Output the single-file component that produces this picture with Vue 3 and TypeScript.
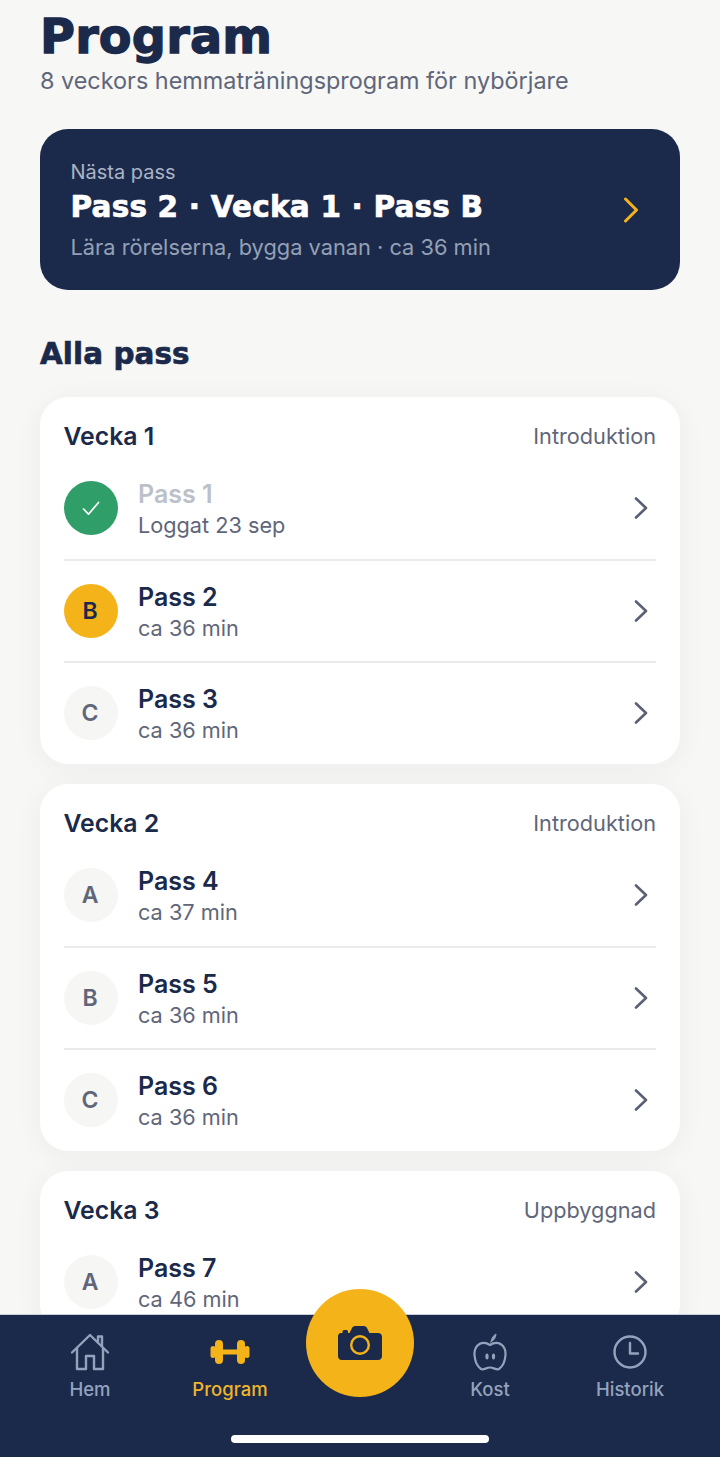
<script setup lang="ts">
interface Row { name: string; sub: string; badge: string; kind: 'done' | 'current' | 'idle' }
interface Week { title: string; tag: string; rows: Row[] }
const weeks: Week[] = [
  { title: 'Vecka 1', tag: 'Introduktion', rows: [
    { name: 'Pass 1', sub: 'Loggat 23 sep', badge: '', kind: 'done' },
    { name: 'Pass 2', sub: 'ca 36 min', badge: 'B', kind: 'current' },
    { name: 'Pass 3', sub: 'ca 36 min', badge: 'C', kind: 'idle' },
  ] },
  { title: 'Vecka 2', tag: 'Introduktion', rows: [
    { name: 'Pass 4', sub: 'ca 37 min', badge: 'A', kind: 'idle' },
    { name: 'Pass 5', sub: 'ca 36 min', badge: 'B', kind: 'idle' },
    { name: 'Pass 6', sub: 'ca 36 min', badge: 'C', kind: 'idle' },
  ] },
  { title: 'Vecka 3', tag: 'Uppbyggnad', rows: [
    { name: 'Pass 7', sub: 'ca 46 min', badge: 'A', kind: 'idle' },
  ] },
]
</script>

<template>
  <div class="app">
    <main class="page">
      <h1 class="title">Program</h1>
      <p class="subtitle">8 veckors hemmaträningsprogram för nybörjare</p>

      <section class="next">
        <div class="next-text">
          <div class="next-label">Nästa pass</div>
          <div class="next-title">Pass 2 · Vecka 1 · Pass B</div>
          <div class="next-sub">Lära rörelserna, bygga vanan · ca 36 min</div>
        </div>
        <svg class="next-chev" width="16" height="26" viewBox="0 0 16 26" fill="none">
          <path d="M2.500 2l11 11-11 11" stroke="#f5b31a" stroke-width="3" stroke-linecap="round" stroke-linejoin="round" />
        </svg>
      </section>

      <h2 class="section">Alla pass</h2>

      <section v-for="w in weeks" :key="w.title" class="card">
        <header class="card-head">
          <span class="week">{{ w.title }}</span>
          <span class="tag">{{ w.tag }}</span>
        </header>
        <div v-for="r in w.rows" :key="r.name" class="row">
          <div class="badge" :class="r.kind">
            <svg v-if="r.kind === 'done'" width="18" height="15" viewBox="0 0 18 15" fill="none">
              <path d="M1.500 8l5 5.200L16.500 1.500" stroke="#fff" stroke-width="1.700" stroke-linecap="round" stroke-linejoin="round" />
            </svg>
            <template v-else>{{ r.badge }}</template>
          </div>
          <div class="row-text">
            <div class="row-name" :class="{ muted: r.kind === 'done' }">{{ r.name }}</div>
            <div class="row-sub">{{ r.sub }}</div>
          </div>
          <svg class="chev" width="14" height="22" viewBox="0 0 14 22" fill="none">
            <path d="M2 1.500L12 11 2 20.500" stroke="#5a6175" stroke-width="2.600" stroke-linecap="round" stroke-linejoin="round" />
          </svg>
        </div>
      </section>
    </main>

    <nav class="tabbar">
      <div class="tab">
        <svg width="40" height="38" viewBox="0 0 40 38" fill="none" stroke="#94a3bd" stroke-width="2.400" stroke-linecap="round" stroke-linejoin="round">
          <path d="M2 19.500L20 2l18 17.500" />
          <path d="M7 15v21h9V23h8v13h9V15" />
          <path d="M28 8.500V3.500h4V13" />
        </svg>
        <span>Hem</span>
      </div>
      <div class="tab active">
        <svg width="40" height="26" viewBox="0 0 40 26" fill="#f5b31a">
          <rect x="0.500" y="7" width="5" height="12" rx="2.500" />
          <rect x="5" y="1" width="8" height="24" rx="4" />
          <rect x="12" y="10.500" width="16" height="5" />
          <rect x="27" y="1" width="8" height="24" rx="4" />
          <rect x="34.500" y="7" width="5" height="12" rx="2.500" />
        </svg>
        <span>Program</span>
      </div>
      <div class="tab spacer"></div>
      <div class="tab">
        <svg width="34" height="38" viewBox="0 0 34 38" fill="none" stroke="#94a3bd" stroke-width="2.200" stroke-linecap="round" stroke-linejoin="round">
          <path d="M17 12c-3-2-7-3-10.500-1C2.500 13.500 1.200 18 1.500 22c.4 5.500 3 11.500 6.500 14 2.500 1.500 5-1.500 9-1.500s6.500 3 9 1.500c3.500-2.500 6.100-8.500 6.500-14 .3-4-1-8.500-5-11-3.500-2-7.500-1-10.500 1z" />
          <path d="M18 9c.3-3.500 2.300-6.500 5-8-.2 3.500-2 6.500-5 8z" fill="#94a3bd" stroke-width="1" />
          <ellipse cx="14" cy="23.500" rx="1.600" ry="3" fill="#94a3bd" stroke="none" />
          <ellipse cx="20.500" cy="23.500" rx="1.600" ry="3" fill="#94a3bd" stroke="none" />
        </svg>
        <span>Kost</span>
      </div>
      <div class="tab">
        <svg width="38" height="38" viewBox="0 0 38 38" fill="none" stroke="#94a3bd" stroke-width="2.400" stroke-linecap="round" stroke-linejoin="round">
          <circle cx="19" cy="19" r="15.500" />
          <path d="M19 10v10.500h8" />
        </svg>
        <span>Historik</span>
      </div>
      <button class="camera" type="button" aria-label="Kamera">
        <svg width="44" height="34" viewBox="0 0 44 34">
          <path d="M3 7h1.500V5.500a1.500 1.500 0 0 1 1.500-1.500h2.500A1.500 1.500 0 0 1 10 5.500V7h1.500L14 2c.5-1 1.500-2 3-2h9c1.500 0 2.500 1 3 2l2.500 5H40c2.500 0 4 1.500 4 4v19c0 2.500-1.500 4-4 4H4c-2.500 0-4-1.500-4-4V11c0-2.500 1-4 3-4z" fill="#1b2a4a" />
          <circle cx="22" cy="19" r="8.800" fill="none" stroke="#f5b31a" stroke-width="2.400" />
        </svg>
      </button>
      <div class="home-bar"></div>
    </nav>
  </div>
</template>

<style>
html, body { margin: 0; background: #f7f7f5; }
</style>

<style scoped>
.app {
  position: relative;
  width: 720px;
  height: 1457px;
  overflow: hidden;
  background: #f7f7f5;
  font-family: Inter, "Noto Sans", sans-serif;
  color: #1b2a4a;
}
.page { padding: 0 40px; }
.title {
  margin: 0;
  padding-top: 7px;
  height: 60px;
  box-sizing: border-box;
  font-family: "DejaVu Sans", sans-serif;
  font-size: 47.700px;
  line-height: 60px;
  font-weight: 700;
  letter-spacing: 0.2px;
  -webkit-text-stroke: 1.300px #1b2a4a;
  color: #1b2a4a;
}
.subtitle {
  margin: 5px 0 0;
  font-size: 23.400px;
  line-height: 32px;
  color: #5f6679;
}
.next {
  margin-top: 32px;
  height: 161px;
  box-sizing: border-box;
  padding: 0 41px 0 30.500px;
  display: flex;
  align-items: center;
  justify-content: space-between;
  background: #1b2a4a;
  border-radius: 28px;
}
.next-label { font-size: 20px; line-height: 28px; color: #aab3c4; padding-top: 1px; }
.next-title {
  margin-top: 2px;
  font-family: "DejaVu Sans", sans-serif;
  font-size: 29.500px;
  line-height: 38px;
  font-weight: 700;
  letter-spacing: 0.2px;
  -webkit-text-stroke: 0.700px #fff;
  color: #fff;
}
.next-sub { margin-top: 6px; font-size: 21.800px; line-height: 30px; color: #94a0b6; }
.section {
  margin: 46px 0 25px;
  font-family: "DejaVu Sans", sans-serif;
  font-size: 29.400px;
  line-height: 36px;
  font-weight: 700;
  letter-spacing: 0.1px;
  -webkit-text-stroke: 0.700px #1b2a4a;
  color: #1b2a4a;
}
.card {
  background: #fff;
  border-radius: 28px;
  margin-bottom: 20px;
  padding: 0 24px;
  box-shadow: 0 4px 28px rgba(27, 42, 74, 0.05);
}
.card-head {
  height: 60px;
  padding-top: 18px;
  box-sizing: border-box;
  display: flex;
  align-items: center;
  justify-content: space-between;
}
.week { font-size: 24.800px; font-weight: 600; color: #1b2a4a; margin-left: -0.500px; }
.tag { font-size: 21.700px; color: #5f6679; }
.row {
  position: relative;
  height: 102.600px;
  display: flex;
  align-items: center;
}
.row:last-child { height: 102px; }
.row:not(:last-child)::after {
  content: "";
  position: absolute;
  left: 0;
  right: 0;
  bottom: -1px;
  height: 2px;
  background: #ebebeb;
}
.badge {
  width: 54px;
  height: 54px;
  flex: none;
  box-sizing: border-box;
  padding-right: 2px;
  border-radius: 50%;
  display: flex;
  align-items: center;
  justify-content: center;
  font-size: 23px;
  font-weight: 600;
}
.badge.done { background: #2f9e68; padding-right: 0; }
.badge.current { background: #f5b31a; color: #1b2a4a; }
.badge.idle { background: #f6f6f4; color: #5f6679; }
.row-text { flex: 1; margin-left: 20px; padding-top: 2px; }
.row-name { font-size: 25px; line-height: 32px; font-weight: 600; color: #1b2a4a; }
.row-name.muted { color: #bcc0c9; }
.row-sub { font-size: 21.700px; line-height: 30px; color: #5f6679; }
.chev { margin-right: 8px; }
.tabbar {
  position: absolute;
  left: 0;
  right: 0;
  bottom: 0;
  height: 142px;
  background: #1b2a4a;
  box-shadow: 0 -1px 0 #c9ced8;
  display: flex;
  align-items: flex-start;
  padding: 18px 20px 0;
  box-sizing: border-box;
}
.tab {
  flex: 1;
  height: 68px;
  display: flex;
  flex-direction: column;
  align-items: center;
  justify-content: flex-end;
  gap: 6px;
  font-size: 18.500px;
  line-height: 24px;
  font-weight: 500;
  color: #94a3bd;
}
.tab.active { color: #f0b429; }
.tab.active svg { margin-bottom: 6px; }
.tab.spacer { flex: 0 0 120px; }
.camera {
  position: absolute;
  left: 306px;
  top: -26px;
  width: 108px;
  height: 108px;
  border: none;
  padding: 0;
  border-radius: 50%;
  background: #f5b31a;
  display: flex;
  align-items: center;
  justify-content: center;
}
.home-bar {
  position: absolute;
  left: 231px;
  bottom: 14px;
  width: 258px;
  height: 8px;
  border-radius: 4px;
  background: #fff;
}
</style>
